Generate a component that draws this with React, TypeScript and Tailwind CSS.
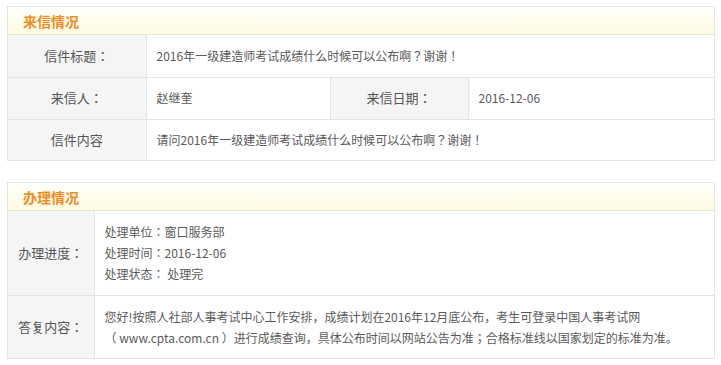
const font = "font-['Microsoft_YaHei','Noto_Sans_CJK_JP',sans-serif]";

function BoxHeader({ title }: { title: string }) {
  return (
    <div className="h-[28px] border-b border-[#e4e4e4] bg-gradient-to-b from-[#fffffb] to-[#fffbe2] pl-[15px] flex items-center">
      <span className="text-[14px] font-bold text-[#f18d1f] leading-none">{title}</span>
    </div>
  );
}

export default function App() {
  const label = "bg-[#f5f5f5] text-center text-[13px] text-[#555] font-normal border-r border-[#e4e4e4]";
  const cell = "px-[10px] text-[12px] text-[#5a5a5a]";

  return (
    <div className={`${font} bg-white w-[721px] h-[365px] pt-[6px] pl-[7px]`}>
      {/* 来信情况 */}
      <div className="w-[708px] border border-[#e4e4e4]">
        <BoxHeader title="来信情况" />
        <table className="w-full border-collapse table-fixed">
          <colgroup>
            <col className="w-[138px]" />
            <col className="w-[184px]" />
            <col className="w-[138px]" />
            <col />
          </colgroup>
          <tbody>
            <tr className="h-[42px] border-b border-[#e4e4e4]">
              <th className={label}>信件标题：</th>
              <td colSpan={3} className={cell}>2016年一级建造师考试成绩什么时候可以公布啊？谢谢！</td>
            </tr>
            <tr className="h-[42px] border-b border-[#e4e4e4]">
              <th className={label}>来信人：</th>
              <td className={`${cell} border-r border-[#e4e4e4]`}>赵继奎</td>
              <th className={label}>来信日期：</th>
              <td className={cell}>2016-12-06</td>
            </tr>
            <tr className="h-[41px]">
              <th className={label}>信件内容</th>
              <td colSpan={3} className={cell}>请问2016年一级建造师考试成绩什么时候可以公布啊？谢谢！</td>
            </tr>
          </tbody>
        </table>
      </div>

      {/* 办理情况 */}
      <div className="w-[708px] border border-[#e4e4e4] mt-[21px]">
        <BoxHeader title="办理情况" />
        <table className="w-full border-collapse table-fixed">
          <colgroup>
            <col className="w-[86px]" />
            <col />
          </colgroup>
          <tbody>
            <tr className="h-[84px] border-b border-[#e4e4e4]">
              <th className={label}>办理进度：</th>
              <td className={`${cell} leading-[21px] py-[10px]`}>
                <div>处理单位：窗口服务部</div>
                <div>处理时间：2016-12-06</div>
                <div>处理状态： 处理完</div>
              </td>
            </tr>
            <tr className="h-[62px]">
              <th className={label}>答复内容：</th>
              <td className={`${cell} leading-[21px] py-[10px]`}>
                您好!按照人社部人事考试中心工作安排，成绩计划在2016年12月底公布，考生可登录中国人事考试网
                <br />
                （ www.cpta.com.cn ）进行成绩查询，具体公布时间以网站公告为准；合格标准线以国家划定的标准为准。
              </td>
            </tr>
          </tbody>
        </table>
      </div>
    </div>
  );
}
